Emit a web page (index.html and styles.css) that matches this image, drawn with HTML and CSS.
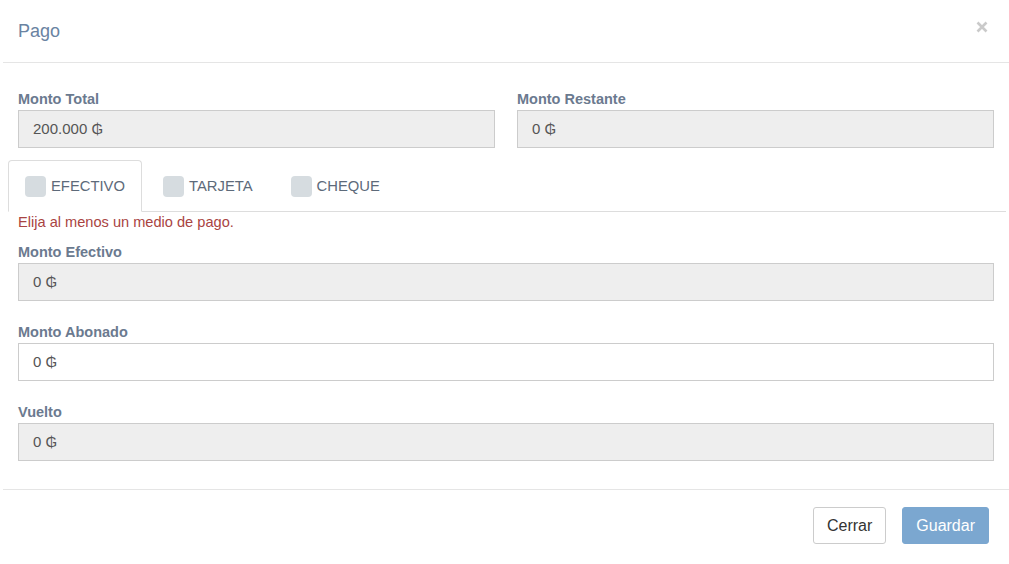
FILE: index.html
```html
<!DOCTYPE html>
<html lang="es">
<head>
<meta charset="utf-8">
<title>Pago</title>
<link rel="stylesheet" href="styles.css">
</head>
<body>
<div class="modal">
  <div class="modal-header">
    <h4 class="modal-title">Pago</h4>
    <span class="close" aria-label="Cerrar">
      <svg width="12" height="12" viewBox="0 0 12 12"><path d="M1.5 1.5 L10.5 10.5 M10.5 1.5 L1.5 10.5" stroke="#cacaca" stroke-width="2.6" stroke-linecap="butt"/></svg>
    </span>
  </div>
  <div class="modal-body">
    <div class="row">
      <div class="group">
        <label class="lbl">Monto Total</label>
        <div class="field readonly">200.000 ₲</div>
      </div>
      <div class="group">
        <label class="lbl">Monto Restante</label>
        <div class="field readonly">0 ₲</div>
      </div>
    </div>
    <div class="tabs">
      <div class="tab active"><span class="check"></span>EFECTIVO</div>
      <div class="tab"><span class="check"></span>TARJETA</div>
      <div class="tab"><span class="check"></span>CHEQUE</div>
    </div>
    <div class="error">Elija al menos un medio de pago.</div>
    <div class="group first">
      <label class="lbl">Monto Efectivo</label>
      <div class="field readonly">0 ₲</div>
    </div>
    <div class="group">
      <label class="lbl">Monto Abonado</label>
      <div class="field">0 ₲</div>
    </div>
    <div class="group">
      <label class="lbl">Vuelto</label>
      <div class="field readonly">0 ₲</div>
    </div>
  </div>
  <div class="modal-footer">
    <button class="btn btn-default">Cerrar</button>
    <button class="btn btn-primary">Guardar</button>
  </div>
</div>
</body>
</html>
```
FILE: styles.css
```css
html, body {
  margin: 0;
  padding: 0;
  background: #fff;
}
body {
  font-family: "Liberation Sans", Arial, "DejaVu Sans", sans-serif;
  font-size: 14.5px;
  color: #333;
}
.modal {
  margin-left: 3px;
  width: 1006px;
}
.modal-header {
  height: 62px;
  border-bottom: 1px solid #e5e5e5;
  display: flex;
  justify-content: space-between;
  align-items: flex-start;
  padding: 0 21px 0 15px;
}
.modal-title {
  margin: 20px 0 0;
  font-size: 18px;
  line-height: 22px;
  font-weight: normal;
  color: #6a83a2;
}
.close {
  margin-top: 21px;
  display: block;
  line-height: 0;
}
.modal-body {
  padding: 26px 15px 28px;
}
.row {
  display: grid;
  grid-template-columns: 1fr 1fr;
  column-gap: 22px;
}
.lbl {
  display: block;
  font-weight: bold;
  font-size: 14.5px;
  line-height: 20px;
  margin-bottom: 1px;
  color: #6b7a8f;
}
.field {
  height: 36px;
  line-height: 36px;
  border: 1px solid #ccc;
  background: #fff;
  padding: 0 14px;
  font-size: 15px;
  color: #555;
  font-family: "Liberation Sans", Arial, "DejaVu Sans", sans-serif;
}
.field.readonly {
  background: #eee;
}
.tabs {
  display: flex;
  gap: 4px;
  margin: 12px -12px 0 -10px;
  border-bottom: 1px solid #ddd;
}
.tab {
  height: 50px;
  margin-bottom: -1px;
  border: 1px solid transparent;
  border-radius: 4px 4px 0 0;
  padding: 0 16px;
  display: flex;
  align-items: center;
  gap: 5px;
  font-size: 14.8px;
  color: #5d6a7a;
}
.tab.active {
  border-color: #ddd;
  border-bottom-color: #fff;
  background: #fff;
}
.check {
  width: 21px;
  height: 21px;
  border-radius: 4px;
  background: #d6dce0;
  display: inline-block;
}
.error {
  line-height: 20px;
  color: #a94442;
  font-size: 14.6px;
}
.group {
  margin-top: 21px;
}
.row .group {
  margin-top: 0;
}
.group.first {
  margin-top: 10px;
}
.modal-footer {
  border-top: 1px solid #e5e5e5;
  padding: 17px 20px 20px;
  display: flex;
  justify-content: flex-end;
  gap: 16px;
}
.btn {
  height: 37px;
  padding: 0 13px;
  font-family: "Liberation Sans", Arial, sans-serif;
  font-size: 16px;
  border-radius: 3px;
  border: 1px solid #ccc;
  background: #fff;
  color: #333;
}
.btn-primary {
  background: #7ba7d0;
  border-color: #7ba7d0;
  color: #fff;
}
```
